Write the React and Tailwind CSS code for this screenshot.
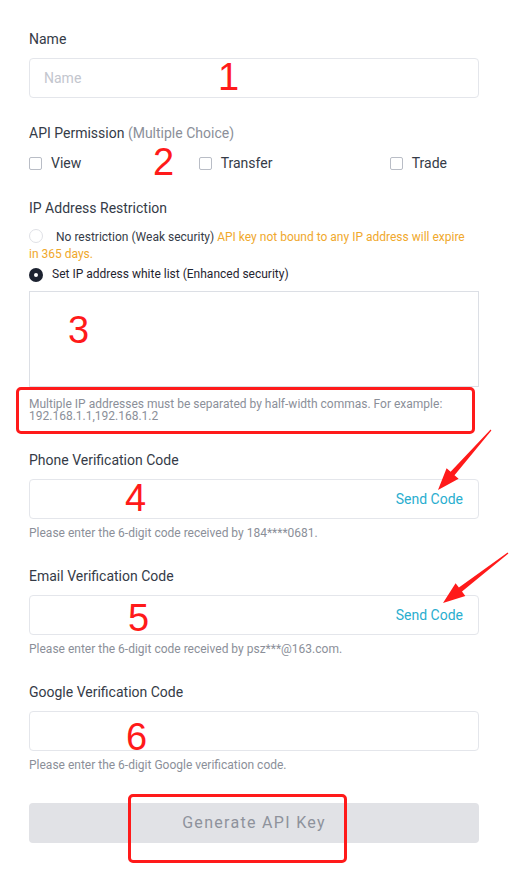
import React from 'react';

const font = { fontFamily: 'Roboto, "Liberation Sans", sans-serif' };

// red annotation arrow: from (ax, ay) to tip (bx, by)
const arrowPoints = (ax, ay, bx, by) => {
    const dx = bx - ax, dy = by - ay;
    const len = Math.hypot(dx, dy);
    const ux = dx / len, uy = dy / len;
    const nx = -uy, ny = ux;
    const hx = bx - 22 * ux, hy = by - 22 * uy;
    const p = (x, y, w) => `${(x + w * nx).toFixed(1)},${(y + w * ny).toFixed(1)}`;
    return [p(ax, ay, 0.6), p(hx, hy, 2.6), p(hx, hy, 8), `${bx},${by}`, p(hx, hy, -8), p(hx, hy, -2.6), p(ax, ay, -0.6)].join(' ');
};

const Label = ({ children, className = '' }) => (
    <div className={`text-[14px] leading-5 text-[#353b47] ${className}`}>{children}</div>
);

const Help = ({ children }) => (
    <div className="mt-[6px] text-[12px] leading-4 text-[#8b8f99]">{children}</div>
);

const CodeInput = ({ send }) => (
    <div className="mt-[9px] h-[40px] rounded border border-[#e4e6eb] flex items-center justify-end pr-[15px]">
        {send && <span className="text-[14px] text-[#2aaecf]">Send Code</span>}
    </div>
);

const Checkbox = ({ label }) => (
    <div className="flex items-center gap-[9px]">
        <span className="w-[13px] h-[13px] rounded-[2px] border border-[#b9bdc6]" />
        <span className="text-[14px] text-[#353b47]">{label}</span>
    </div>
);

const Num = ({ children, className }) => (
    <span
        className={`absolute text-[38px] leading-none text-[#ff1a1a] ${className}`}
        style={{ fontFamily: '"Liberation Sans", sans-serif' }}
    >
        {children}
    </span>
);

export default function App() {
    return (
        <div className="relative w-[514px] min-h-[870px] bg-white pl-[29px] pr-[35px] pt-[29px]" style={font}>
            {/* Name */}
            <Label>Name</Label>
            <div className="mt-[9px] h-[40px] rounded border border-[#e4e6eb] flex items-center px-[14px] text-[14px] text-[#c3c6ce]">
                Name
            </div>

            {/* API permission */}
            <Label className="mt-[25px]">
                API Permission <span className="text-[#8b8f99]">(Multiple Choice)</span>
            </Label>
            <div className="mt-[10px] h-5 flex items-center justify-between pr-[32px]">
                <Checkbox label="View" />
                <Checkbox label="Transfer" />
                <Checkbox label="Trade" />
            </div>

            {/* IP restriction */}
            <Label className="mt-[25px]">IP Address Restriction</Label>
            <div className="mt-[11px] pr-[10px] text-[12px] leading-[17px] text-[#353b47]">
                <span className="inline-block align-[-2px] w-[14px] h-[14px] rounded-full border border-[#dfe1e6] mr-[13px]" />
                No restriction (Weak security){' '}
                <span className="text-[#f0a82c]">API key not bound to any IP address will expire in 365 days.</span>
            </div>
            <div className="mt-[3px] flex items-center text-[12px] leading-[17px] text-[#1f2430]">
                <span className="w-[14px] h-[14px] rounded-full bg-[#1c2230] flex items-center justify-center mr-[9px]">
                    <span className="w-[4px] h-[4px] rounded-full bg-white" />
                </span>
                Set IP address white list (Enhanced security)
            </div>
            <div className="mt-[8px] h-[96px] border border-[#dcdfe5]" />
            <div className="mt-[11px] text-[12px] leading-[12px] text-[#8b8f99]">
                Multiple IP addresses must be separated by half-width commas. For example: 192.168.1.1,192.168.1.2
            </div>

            {/* Phone */}
            <Label className="mt-[28px]">Phone Verification Code</Label>
            <CodeInput send />
            <Help>Please enter the 6-digit code received by 184****0681.</Help>

            {/* Email */}
            <Label className="mt-[25px]">Email Verification Code</Label>
            <CodeInput send />
            <Help>Please enter the 6-digit code received by psz***@163.com.</Help>

            {/* Google */}
            <Label className="mt-[25px]">Google Verification Code</Label>
            <CodeInput />
            <Help>Please enter the 6-digit Google verification code.</Help>

            <button className="mt-[30px] w-full h-[40px] rounded bg-[#e1e2e6] text-[16px] tracking-[1.3px] text-[#8e929c]">
                Generate API Key
            </button>

            {/* annotations */}
            <Num className="left-[218px] top-[58px]">1</Num>
            <Num className="left-[153px] top-[143px]">2</Num>
            <Num className="left-[68px] top-[311px]">3</Num>
            <Num className="left-[125px] top-[479px]">4</Num>
            <Num className="left-[128px] top-[599px]">5</Num>
            <Num className="left-[126px] top-[718px]">6</Num>

            <div className="absolute left-[16px] top-[387px] w-[459px] h-[47px] rounded-[5px] border-[3px] border-[#ff1a1a]" />
            <div className="absolute left-[128px] top-[794px] w-[219px] h-[69px] rounded-[5px] border-[3px] border-[#ff1a1a]" />

            <svg className="absolute left-0 top-0 pointer-events-none" width="514" height="870">
                <polygon points={arrowPoints(491, 430, 438, 490)} fill="#ff1a1a" />
                <polygon points={arrowPoints(508, 553, 443, 603)} fill="#ff1a1a" />
            </svg>
        </div>
    );
}
